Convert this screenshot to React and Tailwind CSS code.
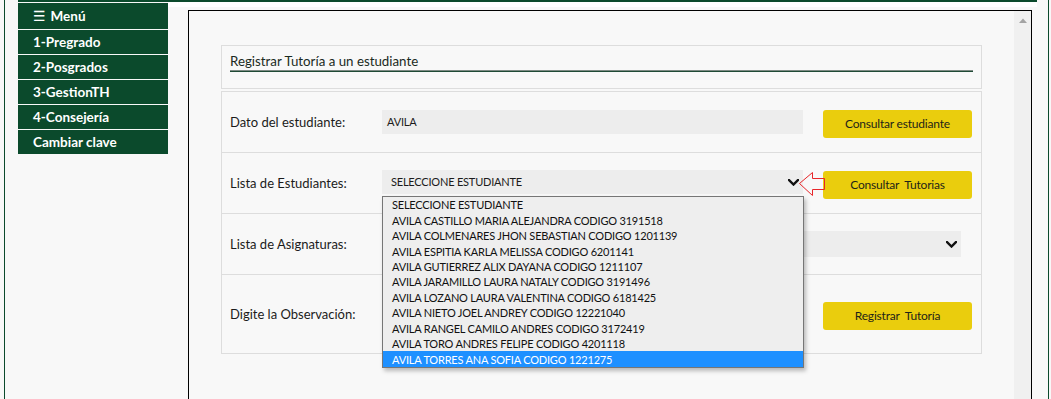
import React from "react";

const students = [
  "SELECCIONE ESTUDIANTE",
  "AVILA CASTILLO MARIA ALEJANDRA CODIGO 3191518",
  "AVILA COLMENARES JHON SEBASTIAN CODIGO 1201139",
  "AVILA ESPITIA KARLA MELISSA CODIGO 6201141",
  "AVILA GUTIERREZ ALIX DAYANA CODIGO 1211107",
  "AVILA JARAMILLO LAURA NATALY CODIGO 3191496",
  "AVILA LOZANO LAURA VALENTINA CODIGO 6181425",
  "AVILA NIETO JOEL ANDREY CODIGO 12221040",
  "AVILA RANGEL CAMILO ANDRES CODIGO 3172419",
  "AVILA TORO ANDRES FELIPE CODIGO 4201118",
  "AVILA TORRES ANA SOFIA CODIGO 1221275",
];

function Chevron() {
  return (
    <svg width="11" height="7" viewBox="0 0 11 7" className="shrink-0">
      <polyline points="1,1 5.5,5.5 10,1" fill="none" stroke="#111" strokeWidth="2.4" strokeLinecap="square" />
    </svg>
  );
}

function YellowButton({ children, className = "" }) {
  return (
    <div
      className={`w-[149px] h-[28px] rounded-[3px] bg-[#eacd0d] flex items-center justify-center text-[12px] tracking-[-0.2px] text-[#1e2418] ${className}`}
    >
      {children}
    </div>
  );
}

export default function App() {
  const menu = ["1-Pregrado", "2-Posgrados", "3-GestionTH", "4-Consejería", "Cambiar clave"];
  return (
    <div className="w-[1051px] h-[399px] overflow-hidden bg-[#f8f8f8] flex font-['Lato',sans-serif] text-[#1b1b1b]">
      <div className="w-[4px] shrink-0" />
      <div className="w-px shrink-0 bg-[#0b4a2c]" />
      <div className="w-[13px] shrink-0" />
      <div className="w-[1019px] shrink-0 flex flex-col border-t-2 border-[#0b4a2c]">
        <div className="flex flex-1 min-h-0">
          {/* Menu */}
          <nav className="w-[150px] shrink-0 mt-px flex flex-col gap-px">
            <div className="h-[26px] bg-[#0b4a2c] text-white font-bold text-[13.5px] flex items-center pl-[15px]">
              <span className="font-['DejaVu_Sans',sans-serif] font-normal text-[14px] mr-[5px]">☰</span>
              Menú
            </div>
            {menu.map((m) => (
              <div
                key={m}
                className="h-[24px] bg-[#0b4a2c] text-white font-bold text-[13.5px] flex items-center pl-[15px]"
              >
                {m}
              </div>
            ))}
          </nav>

          {/* Content column */}
          <div className="flex-1 flex flex-col min-w-0">
            <div className="h-[5px] bg-white" />
            <div className="ml-[20px] mt-[3px] w-[844px] flex-1 border border-black border-b-0 flex min-h-0">
              <main className="flex-1 bg-[#f8f8f8] pl-[32px] pt-[34px]">
                <div className="w-[761px]">
                  {/* Header box */}
                  <div className="border border-[#dddddd] px-[8px] pt-[7px] pb-[16px]">
                    <div className="h-[17px] leading-[17px] text-[13.3px] text-[#1a2a22]">
                      Registrar Tutoría a un estudiante
                    </div>
                    <div className="h-[2px] flex flex-col">
                      <div className="h-px bg-[#7d8a83]" />
                      <div className="h-px bg-[#1f4a35]" />
                    </div>
                  </div>

                  {/* Rows box */}
                  <div className="mt-[2px] border border-[#dddddd] flex flex-col text-[13px]">
                    {/* Row 1 */}
                    <div className="h-[61px] px-[8px] pt-[18px] flex items-start border-b border-[#dddddd]">
                      <div className="w-[152px] h-[24px] leading-[24px]">Dato del estudiante:</div>
                      <div className="w-[421px] h-[24px] bg-[#ededed] flex items-center pl-[5px] text-[11px] tracking-[-0.2px]">
                        AVILA
                      </div>
                      <YellowButton className="ml-[20px]">Consultar estudiante</YellowButton>
                    </div>

                    {/* Row 2 */}
                    <div className="relative h-[61px] px-[8px] pt-[17px] flex items-start border-b border-[#dddddd]">
                      <div className="w-[152px] h-[26px] leading-[26px]">Lista de Estudiantes:</div>
                      <div className="w-[421px] h-[24px] bg-[#ededed] flex items-center justify-between pl-[9px] pr-[4px] text-[11px] tracking-[-0.2px]">
                        <span>SELECCIONE ESTUDIANTE</span>
                        <Chevron />
                      </div>
                      <YellowButton className="ml-[20px] mt-px">
                        {"Consultar\u00a0 Tutorias"}
                      </YellowButton>

                      {/* Red arrow */}
                      <svg
                        className="absolute left-[575px] top-[17px] z-10"
                        width="29"
                        height="27"
                        viewBox="0 0 29 27"
                      >
                        <polygon
                          points="2.5,13.5 15.5,2.5 15.5,8.5 27.5,8.5 27.5,19.5 15.5,19.5 15.5,25.5"
                          fill="none"
                          stroke="#e8262a"
                          strokeWidth="1"
                        />
                      </svg>

                      {/* Dropdown list */}
                      <div className="absolute left-[160px] top-[43px] w-[422px] h-[172px] z-20 border border-[#767676] bg-[#eeeeee] shadow-[2px_3px_4px_rgba(0,0,0,0.25)] flex flex-col text-[11px] tracking-[-0.2px]">
                        {students.map((s, i) => (
                          <div
                            key={s}
                            className={`h-[15.45px] shrink-0 leading-[15px] overflow-hidden flex items-center pl-[9px] whitespace-nowrap ${
                              i === students.length - 1 ? "bg-[#1e90ff] text-white" : "text-[#111]"
                            }`}
                          >
                            {s}
                          </div>
                        ))}
                      </div>
                    </div>

                    {/* Row 3 */}
                    <div className="h-[61px] px-[8px] pt-[17px] flex items-start border-b border-[#dddddd]">
                      <div className="w-[152px] h-[26px] leading-[26px]">Lista de Asignaturas:</div>
                      <div className="w-[579px] h-[26px] bg-[#ededed] flex items-center justify-end pr-[4px]">
                        <Chevron />
                      </div>
                    </div>

                    {/* Row 4 */}
                    <div className="h-[78px] px-[8px] pt-[27px] flex items-start">
                      <div className="w-[152px] h-[24px] leading-[24px]">Digite la Observación:</div>
                      <div className="w-[421px]" />
                      <YellowButton className="ml-[20px]">{"Registrar\u00a0 Tutoría"}</YellowButton>
                    </div>
                  </div>
                </div>
              </main>
              <div className="w-[17px] shrink-0 bg-[#f0f0f0] flex justify-center pt-[7px]">
                <svg width="8" height="5" viewBox="0 0 8 5">
                  <polygon points="0,5 4,0.5 8,5" fill="#a3a3a3" />
                </svg>
              </div>
            </div>
          </div>
        </div>
      </div>
      <div className="w-[11px] shrink-0" />
      <div className="w-px shrink-0 bg-[#0b4a2c]" />
    </div>
  );
}
